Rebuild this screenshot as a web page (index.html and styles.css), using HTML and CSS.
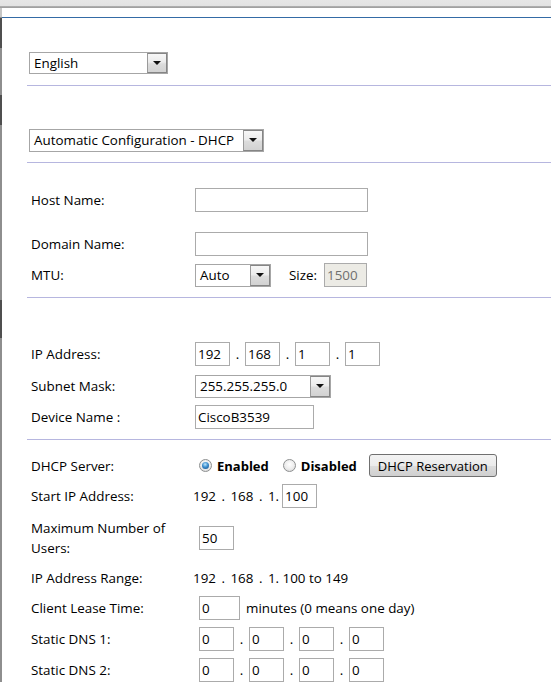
FILE: index.html
```html
<!DOCTYPE html>
<html lang="en">
<head>
<meta charset="utf-8">
<title>Setup</title>
<link rel="stylesheet" href="styles.css">
</head>
<body>
<div class="topbar"></div>
<div class="frame">
  <div class="rail"></div>
  <div class="main">
    <div class="topline"></div>
    <div class="content">
      <div class="sec sec-lang">
        <div class="sel sel-lang"><span class="sel-text">English</span><span class="sel-btn"><i class="tri"></i></span></div>
      </div>
      <div class="sep"></div>
      <div class="sec sec-conn">
        <div class="sel sel-conn"><span class="sel-text">Automatic Configuration - DHCP</span><span class="sel-btn"><i class="tri"></i></span></div>
      </div>
      <div class="sep"></div>
      <div class="sec sec-opt">
        <div class="row">
          <span class="lbl">Host Name:</span>
          <div class="val"><input class="inp w-host" type="text" value=""></div>
        </div>
        <div class="row mt-20">
          <span class="lbl">Domain Name:</span>
          <div class="val"><input class="inp w-host" type="text" value=""></div>
        </div>
        <div class="row mt-7">
          <span class="lbl">MTU:</span>
          <div class="val">
            <div class="sel sel-mtu"><span class="sel-text">Auto</span><span class="sel-btn"><i class="tri"></i></span></div>
            <span class="size-lbl">Size:</span>
            <input class="inp w-size" type="text" value="1500" disabled>
          </div>
        </div>
      </div>
      <div class="sep"></div>
      <div class="sec sec-net">
        <div class="row">
          <span class="lbl">IP Address:</span>
          <div class="val">
            <input class="inp w-oct" type="text" value="192"><span class="dot">.</span><input class="inp w-oct" type="text" value="168"><span class="dot">.</span><input class="inp w-oct" type="text" value="1"><span class="dot">.</span><input class="inp w-oct" type="text" value="1">
          </div>
        </div>
        <div class="row mt-8">
          <span class="lbl">Subnet Mask:</span>
          <div class="val">
            <div class="sel sel-mask"><span class="sel-text">255.255.255.0</span><span class="sel-btn"><i class="tri"></i></span></div>
          </div>
        </div>
        <div class="row mt-7">
          <span class="lbl">Device Name :</span>
          <div class="val"><input class="inp w-dev" type="text" value="CiscoB3539"></div>
        </div>
      </div>
      <div class="sep"></div>
      <div class="sec sec-dhcp">
        <div class="row row-d h-23">
          <span class="lbl">DHCP Server:</span>
          <div class="val">
            <span class="radio on ind"></span><span class="rlbl">Enabled</span>
            <span class="radio gap-r"></span><span class="rlbl">Disabled</span>
            <button class="btn" type="button">DHCP Reservation</button>
          </div>
        </div>
        <div class="row row-d mt-7">
          <span class="lbl">Start IP Address:</span>
          <div class="val"><span class="txt ws">192 . 168 . 1.</span><input class="inp w-oct start" type="text" value="100"></div>
        </div>
        <div class="row row-d mt-10">
          <span class="lbl two">Maximum Number of<br>Users:</span>
          <div class="val"><input class="inp w-oct ind" type="text" value="50"></div>
        </div>
        <div class="row row-d mt-8">
          <span class="lbl">IP Address Range:</span>
          <div class="val"><span class="txt"><span class="ws">192 . 168 . 1.</span> 100 to 149</span></div>
        </div>
        <div class="row row-d mt-6">
          <span class="lbl">Client Lease Time:</span>
          <div class="val"><input class="inp w-lease ind" type="text" value="0"><span class="txt unit">minutes (0 means one day)</span></div>
        </div>
        <div class="row row-d mt-7">
          <span class="lbl">Static DNS 1:</span>
          <div class="val">
            <input class="inp w-oct ind" type="text" value="0"><span class="dot">.</span><input class="inp w-oct" type="text" value="0"><span class="dot">.</span><input class="inp w-oct" type="text" value="0"><span class="dot">.</span><input class="inp w-oct" type="text" value="0">
          </div>
        </div>
        <div class="row row-d mt-7">
          <span class="lbl">Static DNS 2:</span>
          <div class="val">
            <input class="inp w-oct ind" type="text" value="0"><span class="dot">.</span><input class="inp w-oct" type="text" value="0"><span class="dot">.</span><input class="inp w-oct" type="text" value="0"><span class="dot">.</span><input class="inp w-oct" type="text" value="0">
          </div>
        </div>
      </div>
    </div>
  </div>
</div>
</body>
</html>
```

FILE: styles.css
```css
* { box-sizing: border-box; }
html, body { margin: 0; padding: 0; background: #fff; }
body {
  width: 551px;
  height: 682px;
  overflow: hidden;
  font-family: "Open Sans", "Noto Sans", "Liberation Sans", sans-serif;
  font-size: 13.4px;
  color: #000;
}

.topbar {
  height: 8px;
  background: linear-gradient(to bottom, #e6e6e6 0, #e2e2e2 6px, #b3b3b3 6px, #9a9a9a 8px);
}

.frame { display: flex; height: 674px; }

.rail {
  width: 2px;
  flex: none;
  background: linear-gradient(to bottom,
    #c6c6c6 0, #c6c6c6 9px,
    #8e8e8e 9px, #8e8e8e 10px,
    #4f4f4f 10px, #4f4f4f 40px,
    #8e8e8e 40px, #8e8e8e 87px,
    #4f4f4f 87px, #4f4f4f 117px,
    #8e8e8e 117px, #8e8e8e 292px,
    #4f4f4f 292px, #4f4f4f 330px,
    #8e8e8e 330px, #8e8e8e 100%);
}

.main { flex: 1; min-width: 0; }

.topline { height: 10px; border-bottom: 1px solid #346ba6; }

.content { padding-left: 25px; }

.sep { height: 1px; background: #b6b6df; }

.sec-lang { padding: 34px 0 11px; }
.sec-conn { padding: 43px 0 10px; }
.sec-opt { padding: 25px 0 10px; }
.sec-net { padding: 44px 0 10px; }
.sec-dhcp { padding: 14px 0 0; }

/* select look-alike */
.sel {
  display: flex;
  height: 23px;
  margin-left: 2px;
  border: 1px solid #a6a6a6;
  background: #fff;
}
.sel-lang { width: 139px; height: 22px; }
.sel-conn { width: 235px; }
.sel-mtu { width: 76px; margin-left: 0; }
.sel-mask { width: 136px; margin-left: 0; }
.sel-text {
  flex: 1;
  padding-left: 4px;
  line-height: 21px;
  white-space: nowrap;
  overflow: hidden;
}
.sel-lang .sel-text { line-height: 20px; }
.sel-btn {
  width: 20px;
  flex: none;
  border: 1px solid #858585;
  border-left-color: #9a9a9a;
  background: linear-gradient(to bottom, #f7f7f7 0, #ececec 45%, #dcdcdc 55%, #d2d2d2 100%);
  display: flex;
  align-items: center;
  justify-content: center;
}
.tri {
  width: 0;
  height: 0;
  border-left: 4px solid transparent;
  border-right: 4px solid transparent;
  border-top: 4px solid #111;
  margin-top: -1px;
}

/* rows */
.row {
  display: grid;
  grid-template-columns: 164px 1fr;
  align-items: center;
  padding-left: 4px;
  min-height: 24px;
}
.row-d { grid-template-columns: 162px 1fr; }
.h-23 { min-height: 23px; }
.mt-6 { margin-top: 6px; }
.mt-7 { margin-top: 7px; }
.mt-8 { margin-top: 8px; }
.mt-10 { margin-top: 10px; }
.mt-20 { margin-top: 20px; }

.lbl { white-space: nowrap; }
.lbl.two { line-height: 20px; }

.val { display: flex; align-items: center; white-space: nowrap; }

.ws { word-spacing: 2px; }

.inp {
  height: 24px;
  margin: 0;
  padding: 0 2px;
  border: 1px solid #ababab;
  border-radius: 0;
  background: #fff;
  font: inherit;
  color: #000;
  outline: none;
}
.inp:disabled { background: #ecebe5; color: #6f6f6f; }
.w-host { width: 173px; }
.w-size { width: 43px; margin-left: 7px; }
.w-oct { width: 35px; }
.w-dev { width: 119px; }
.w-lease { width: 41px; }
.ind { margin-left: 6px; }
.start { margin-left: 3px; }

.dot { width: 15px; text-align: center; }
.size-lbl { margin-left: 18px; }
.unit { margin-left: 6px; }

.radio {
  width: 13px;
  height: 13px;
  flex: none;
  border-radius: 50%;
  border: 1px solid #8d8f90;
  background: radial-gradient(circle at 50% 40%, #ffffff 0, #ececec 55%, #cdcdcd 100%);
  display: flex;
  align-items: center;
  justify-content: center;
}
.radio.on::after {
  content: "";
  width: 7px;
  height: 7px;
  border-radius: 50%;
  background: radial-gradient(circle at 45% 35%, #bfe6fb 0, #3d8fcf 45%, #0f457d 100%);
}
.gap-r { margin-left: 14px; }
.rlbl { font-weight: bold; font-size: 13px; margin-left: 5px; }

.btn {
  height: 23px;
  width: 128px;
  margin: 0 0 0 12px;
  padding: 0;
  border: 1px solid #707070;
  border-radius: 3px;
  background: linear-gradient(to bottom, #f3f3f3 0, #ebebeb 50%, #dddddd 51%, #cfcfcf 100%);
  font: inherit;
  font-size: 13px;
  color: #000;
}
```
